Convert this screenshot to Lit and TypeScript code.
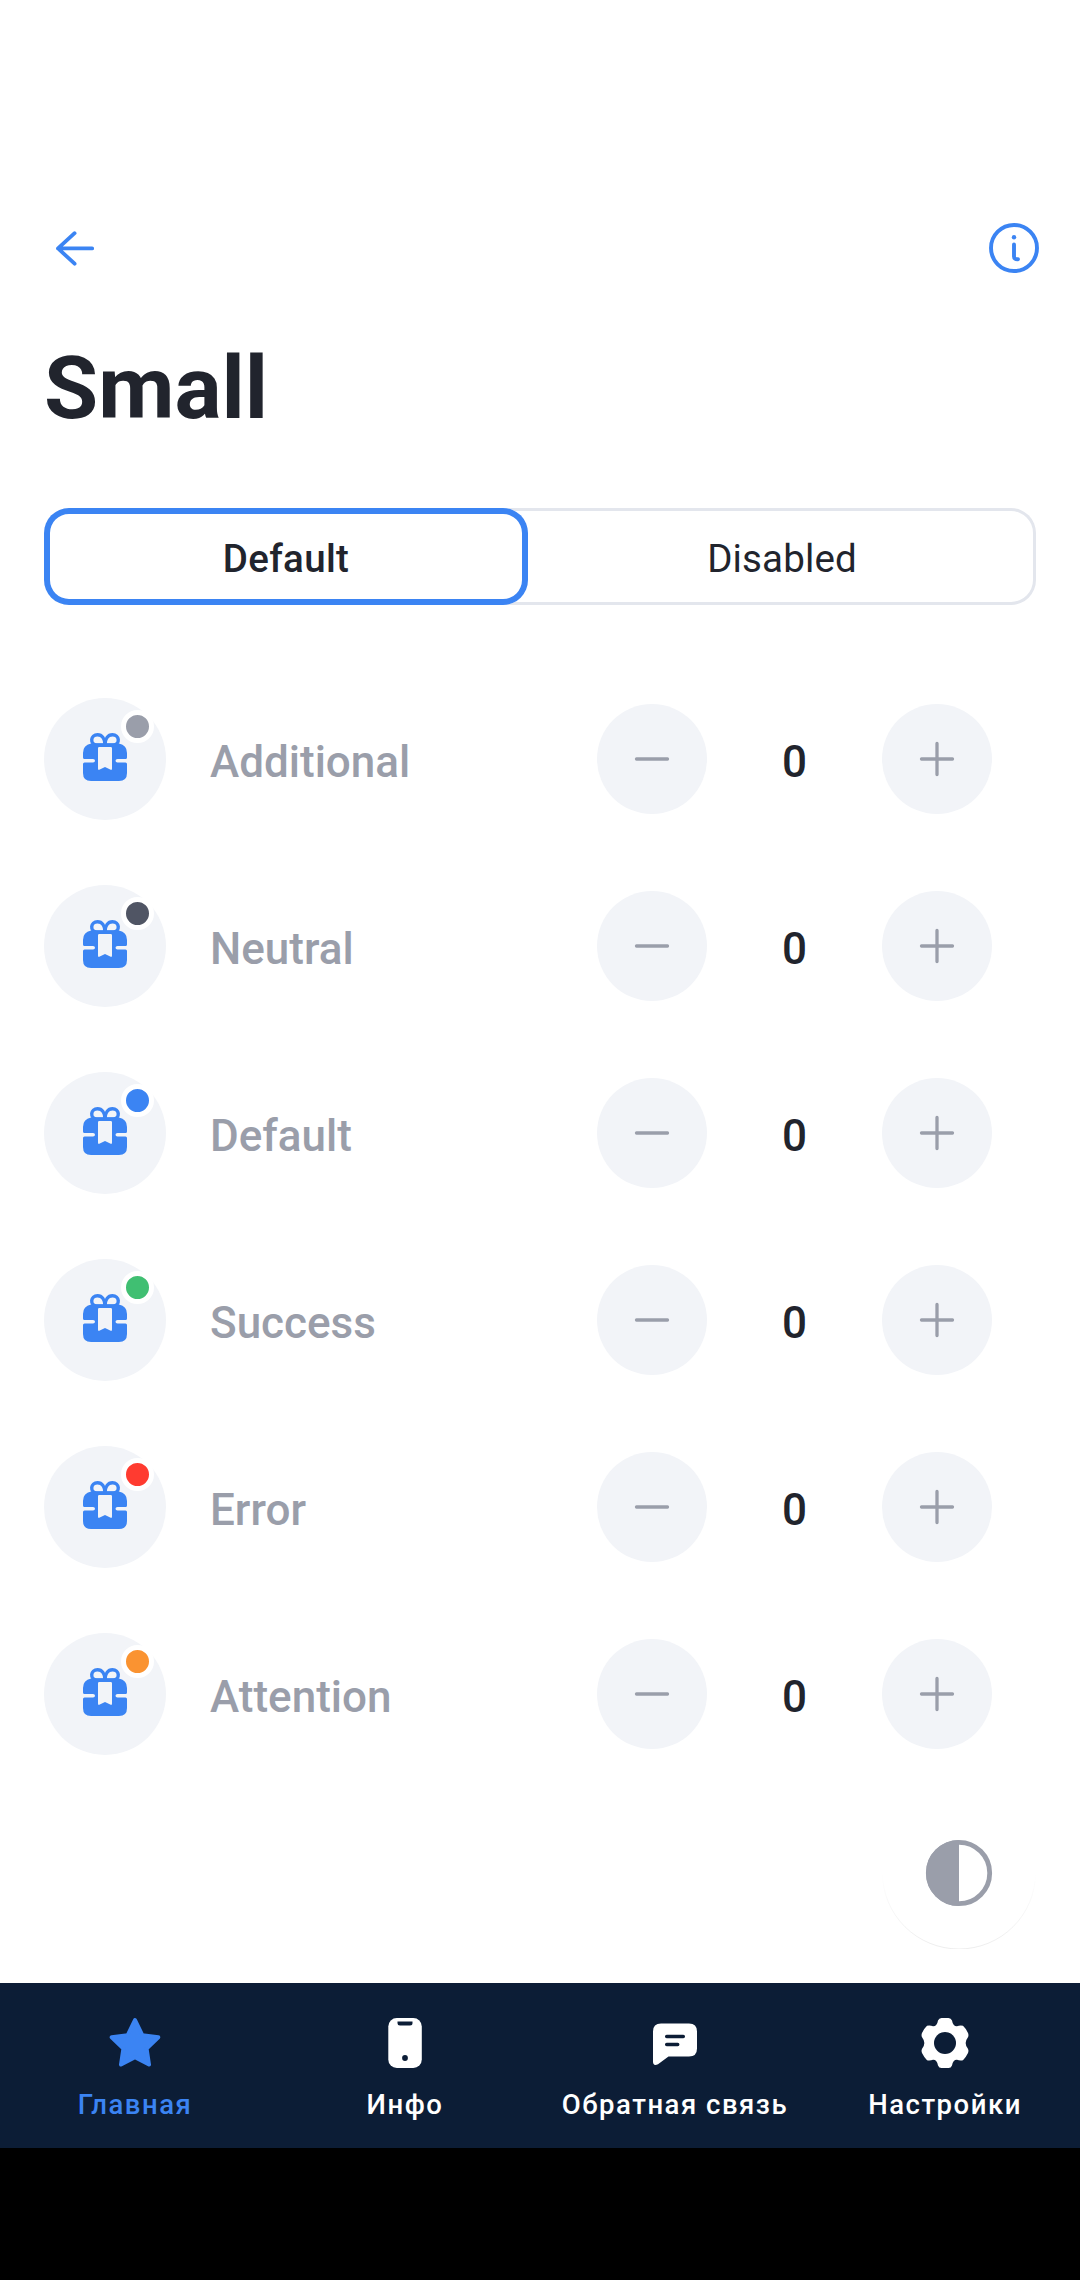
import { LitElement, html, css, svg } from "lit";
import { customElement, property, state } from "lit/decorators.js";

interface Row { name: string; tone: string; }

const ROWS: Row[] = [
  { name: "Additional", tone: "additional" },
  { name: "Neutral", tone: "neutral" },
  { name: "Default", tone: "primary" },
  { name: "Success", tone: "success" },
  { name: "Error", tone: "error" },
  { name: "Attention", tone: "attention" },
];

@customElement("counter-row")
export class CounterRow extends LitElement {
  @property() name = "";
  @property() tone = "additional";
  @state() private count = 0;

  static styles = css`
    :host { display: flex; align-items: center; height: 187px; padding: 0 88px 0 44px; box-sizing: border-box; }
    .avatar { position: relative; width: 122px; height: 122px; border-radius: 50%; background: #f2f4f8; }
    .gift { display: block; width: 122px; height: 122px; }
    .badge { position: absolute; left: 77px; top: 12px; width: 33px; height: 33px; box-sizing: border-box; border: 5px solid #fff; border-radius: 50%; }
    .additional { background: #9a9eaa; }
    .neutral { background: #505564; }
    .primary { background: #3b84f3; }
    .success { background: #40bf72; }
    .error { background: #ff3b30; }
    .attention { background: #fa9331; }
    .name { flex: 1; margin-left: 44px; padding-top: 7px; color: #9a9eaa; font-size: 44px; line-height: 56px; font-weight: 500; }
    .step { display: block; width: 110px; height: 110px; padding: 0; border: 0; border-radius: 50%; background: #f2f4f8; }
    .step svg { display: block; }
    .count { width: 175px; padding-top: 7px; text-align: center; color: #21242d; font-size: 44px; line-height: 56px; font-weight: 500; }
  `;

  render() {
    return html`
      <div class="avatar">
        <svg class="gift" viewBox="0 0 122 122">
          <g fill="none" stroke="#3b84f3" stroke-width="3.400">
            <path d="M61 47H52.500C45.500 46 46.500 36.700 53.500 36.700C58 36.700 61 40.500 61 47Z"/>
            <path d="M61 47H69.500C76.500 46 75.500 36.700 68.500 36.700C64 36.700 61 40.500 61 47Z"/>
          </g>
          <path fill="#3b84f3" d="M47 45.500H75Q83 47 83 55V59.500Q83 61 81.500 61H73.500Q71.500 61 71.500 62.700T73.500 64.400H81.500Q83 64.400 83 66V75Q83 83 75 83H47Q39 83 39 75V66Q39 64.400 40.500 64.400H49Q51 64.400 51 62.700T49 61H40.500Q39 61 39 59.500V55Q39 47 47 45.500Z"/>
          <path fill="#f2f4f8" d="M55.300 49H66.700Q68 49 68 50.300V70.500Q68 72.600 66.200 71.600L61 69L55.800 71.600Q54 72.600 54 70.500V50.300Q54 49 55.300 49Z"/>
        </svg>
        <span class="badge ${this.tone}"></span>
      </div>
      <div class="name">${this.name}</div>
      <button class="step" aria-label="−" @click=${() => { this.count = Math.max(0, this.count - 1); }}>
        <svg width="110" height="110"><path d="M39.500 55H70.500" stroke="#9a9eaa" stroke-width="3.300" stroke-linecap="round"/></svg>
      </button>
      <div class="count">${this.count}</div>
      <button class="step" aria-label="+" @click=${() => { this.count += 1; }}>
        <svg width="110" height="110"><path d="M39.500 55H70.500M55 39.500V70.500" stroke="#9a9eaa" stroke-width="3.300" stroke-linecap="round"/></svg>
      </button>
    `;
  }
}

const star = svg`<path fill="#3b84f3" stroke="#3b84f3" stroke-width="4" stroke-linejoin="round" d="M33 10L40.300 25.200L56.300 27.200L44.600 38.600L47 54.500L33 47.300L19 54.500L21.400 38.600L9.700 27.200L25.700 25.200Z"/>`;
const phone = svg`<rect x="16.300" y="8" width="33.500" height="50" rx="8.500" fill="#fff"/><path fill="#0c1d36" d="M25.500 11.500H40.500V13Q40.500 15.500 38 15.500H28Q25.500 15.500 25.500 13Z"/><circle cx="33" cy="48" r="2.900" fill="#0c1d36"/>`;
const chat = svg`<path fill="#fff" d="M19 13.500H47Q55 13.500 55 21.500V38.500Q55 46.500 47 46.500H26.500L16 54.300Q11 56.500 11 51.500V21.500Q11 13.500 19 13.500Z"/><path d="M24.700 26.500H41.300M24.700 34.500H35.700" stroke="#0c1d36" stroke-width="3.500" stroke-linecap="round"/>`;
const gear = svg`<path fill="#fff" d="M29.500 8H36.500Q39 8 40 10.500Q41 16.500 45 16.300Q48 15 51 15.800Q53.500 18 56 23Q57 25.500 55.800 27.500Q51.500 33 55.800 38.500Q57 40.500 56 43Q53.500 48 51 50.200Q48 51 45 49.700Q41 49.500 40 55.500Q39 58 36.500 58H29.500Q27 58 26 55.500Q25 49.500 21 49.700Q18 51 15 50.200Q12.500 48 10 43Q9 40.500 10.200 38.500Q14.500 33 10.200 27.500Q9 25.500 10 23Q12.500 18 15 15.800Q18 15 21 16.300Q25 16.500 26 10.500Q27 8 29.500 8Z"/><circle cx="33" cy="33" r="11" fill="#0c1d36"/>`;

const TABS = [
  { label: "Главная", icon: star },
  { label: "Инфо", icon: phone },
  { label: "Обратная связь", icon: chat },
  { label: "Настройки", icon: gear },
];

@customElement("app-root")
export class AppRoot extends LitElement {
  @state() private active = 0;

  static styles = css`
    :host { display: block; font-family: Roboto, "Liberation Sans", sans-serif; }
    .screen { position: relative; display: flex; flex-direction: column; width: 1080px; height: 2280px; overflow: hidden; background: #fff; }
    .bar { display: flex; justify-content: space-between; align-items: center; height: 88px; padding: 204px 33px 0 42px; }
    .bar svg { display: block; }
    .title { margin: 0; padding: 42px 44px 0; color: #21242d; font-size: 88px; line-height: 108px; font-weight: 700; }
    .segments { display: flex; width: 992px; height: 97px; margin: 66px 44px 0; box-sizing: border-box; border-radius: 25px; box-shadow: inset 0 0 0 3px #e3e6ed; }
    .segment { flex: 1; display: flex; align-items: center; justify-content: center; padding: 5px 0 0; box-sizing: border-box; color: #21242d; font-size: 38.500px; line-height: 48px; letter-spacing: .15px; border-radius: 25px; }
    .selected { flex: 0 0 484px; font-weight: 500; letter-spacing: .35px; background: #fff; box-shadow: inset 0 0 0 6px #3b84f3; }
    .rows { flex: 1; padding-top: 60px; }
    .theme { position: absolute; left: 882px; top: 1796px; width: 154px; height: 153px; border-radius: 50%; }
    .theme svg { display: block; }
    .tabs { display: flex; height: 165px; background: #0c1d36; }
    .tab { flex: 1; display: flex; flex-direction: column; align-items: center; padding-top: 27px; color: #fff; font-size: 27.500px; line-height: 34px; font-weight: 500; letter-spacing: 1.520px; white-space: nowrap; }
    .tab svg { display: block; margin-bottom: 12px; }
    .current { color: #3b84f3; }
    .system { height: 132px; background: #000; }
  `;

  render() {
    return html`
      <div class="screen">
        <header class="bar">
          <svg width="66" height="66" fill="none" stroke="#3b84f3" stroke-width="3.800" stroke-linecap="round" stroke-linejoin="round"><path d="M50.200 33.400H16M32.600 18.200L16 33.400L32.600 48.700"/></svg>
          <svg width="66" height="66" fill="none" stroke="#3b84f3" stroke-width="3.900" stroke-linecap="round"><circle cx="33" cy="33" r="23"/><path d="M33 29.500V41.500Q33 44.500 37 44.200"/><circle cx="33" cy="22.300" r="2.200" fill="#3b84f3" stroke="none"/></svg>
        </header>
        <h1 class="title">Small</h1>
        <div class="segments">
          ${["Default", "Disabled"].map((s, i) => html`<div class="segment ${i === this.active ? "selected" : ""}" @click=${() => { this.active = i; }}>${s}</div>`)}
        </div>
        <main class="rows">
          ${ROWS.map((r) => html`<counter-row .name=${r.name} .tone=${r.tone}></counter-row>`)}
        </main>
        <div class="theme">
          <svg width="154" height="153" fill="none"><defs><linearGradient id="edge" x1="0" y1="77" x2="0" y2="153" gradientUnits="userSpaceOnUse"><stop stop-opacity="0"/><stop offset="1" stop-opacity=".07"/></linearGradient></defs><path d="M.5 77A76.500 76 0 0 0 153.500 77" stroke="url(#edge)"/><circle cx="77" cy="77" r="30.700" stroke="#9a9eaa" stroke-width="4.800"/><path d="M77 44A33 33 0 0 0 77 110Z" fill="#9a9eaa"/></svg>
        </div>
        <nav class="tabs">
          ${TABS.map((t, i) => html`<div class="tab ${i === 0 ? "current" : ""}"><svg width="66" height="66">${t.icon}</svg>${t.label}</div>`)}
        </nav>
        <div class="system"></div>
      </div>
    `;
  }
}
